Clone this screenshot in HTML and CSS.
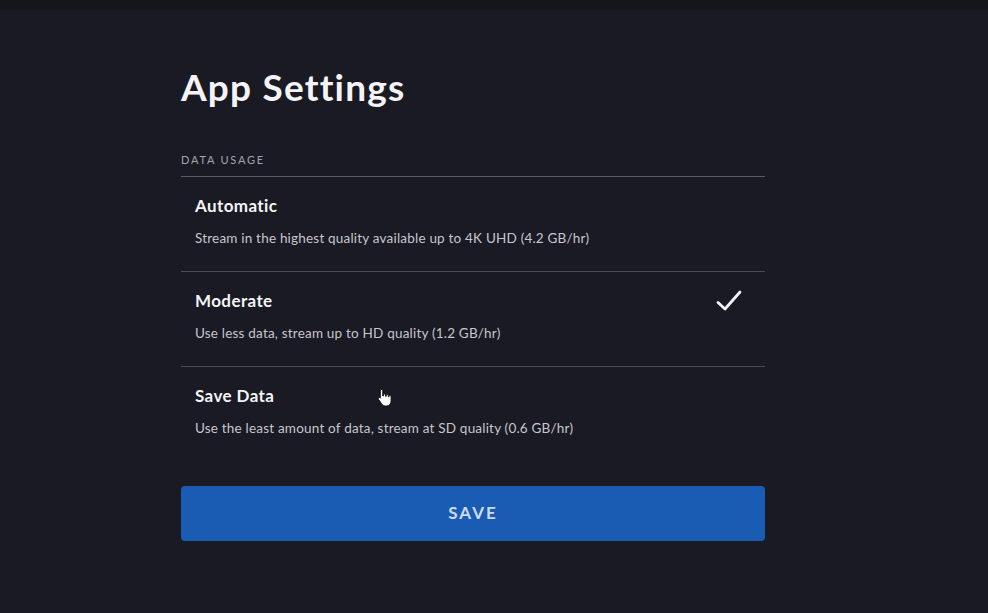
FILE: index.html
```html
<!DOCTYPE html>
<html lang="en">
<head>
<meta charset="utf-8">
<title>App Settings</title>
<link rel="stylesheet" href="styles.css">
</head>
<body>
<div class="topband"></div>
<main class="settings">
  <h1 class="title">App Settings</h1>
  <div class="section-label">DATA USAGE</div>
  <ul class="options">
    <li class="option">
      <div class="option-text">
        <div class="option-name">Automatic</div>
        <div class="option-desc">Stream in the highest quality available up to 4K UHD (4.2 GB/hr)</div>
      </div>
    </li>
    <li class="option selected">
      <div class="option-text">
        <div class="option-name">Moderate</div>
        <div class="option-desc">Use less data, stream up to HD quality (1.2 GB/hr)</div>
      </div>
      <svg class="check" width="28" height="24" viewBox="0 0 28 24" aria-hidden="true">
        <path d="M3 13.5 L10 20 L25 3" fill="none" stroke="#f2f2f4" stroke-width="2.8" stroke-linecap="round" stroke-linejoin="round"/>
      </svg>
    </li>
    <li class="option last">
      <div class="option-text">
        <div class="option-name">Save Data</div>
        <div class="option-desc">Use the least amount of data, stream at SD quality (0.6 GB/hr)</div>
      </div>
      <svg class="cursor" width="16" height="20" viewBox="0 0 16 20" aria-hidden="true">
        <path d="M4.5 1.5 C5.3 1.5 5.8 2 5.8 2.8 L5.8 8 L6.4 8 L6.4 7 C6.4 6.3 7 5.9 7.6 5.9 C8.2 5.9 8.7 6.3 8.7 7 L8.7 8.3 L9.2 8.3 L9.2 7.6 C9.2 7 9.8 6.6 10.4 6.6 C11 6.6 11.4 7 11.4 7.6 L11.4 8.8 L11.9 8.8 L11.9 8.4 C11.9 7.8 12.4 7.5 13 7.5 C13.6 7.5 14.1 7.9 14.1 8.5 L14.1 13 C14.1 15.8 12.6 18 9.6 18 L8.4 18 C6.6 18 5.6 17.2 4.6 15.8 L1.6 11.6 C1.1 10.9 1.3 10.2 1.9 9.8 C2.5 9.4 3.2 9.6 3.6 10.2 L3.3 9.8 L3.3 2.8 C3.3 2 3.8 1.5 4.5 1.5 Z" fill="#ffffff" stroke="#111" stroke-width="1"/>
      </svg>
    </li>
  </ul>
  <button class="save" type="button">SAVE</button>
</main>
</body>
</html>
```

FILE: styles.css
```css
* { box-sizing: border-box; }
html, body {
  margin: 0;
  padding: 0;
  height: 100%;
}
body {
  background: #191a23;
  font-family: Lato, "Noto Sans", "Liberation Sans", sans-serif;
  color: #f2f2f4;
  overflow: hidden;
}
.topband {
  height: 10px;
  background: #15161b;
}
.settings {
  width: 584px;
  margin-left: 181px;
  padding-top: 55px;
}
.title {
  margin: 0;
  font-size: 37px;
  line-height: 44px;
  font-weight: 700;
  color: #f4f4f6;
  letter-spacing: 1.2px;
}
.section-label {
  margin-top: 44px;
  font-size: 11px;
  line-height: 14px;
  letter-spacing: 1.8px;
  color: #a3a4ab;
  font-weight: 400;
  padding-bottom: 9px;
  border-bottom: 1px solid #5b5c64;
}
.options {
  list-style: none;
  margin: 0;
  padding: 0;
}
.option {
  position: relative;
  display: flex;
  align-items: flex-start;
  justify-content: space-between;
  padding: 19px 22px 24px 14px;
  border-bottom: 1px solid #4b4c55;
}
.option.last {
  border-bottom: none;
}
.option-text {
  display: flex;
  flex-direction: column;
  gap: 13px;
}
.option-name {
  font-size: 17px;
  line-height: 20px;
  font-weight: 700;
  color: #f4f4f6;
  letter-spacing: 0.4px;
}
.option-desc {
  font-size: 13.5px;
  line-height: 18px;
  color: #c6c6cc;
  letter-spacing: 0.2px;
}
.check {
  margin-top: -2px;
}
.cursor {
  position: absolute;
  left: 196px;
  top: 21px;
}
.save {
  display: block;
  width: 100%;
  height: 55px;
  margin-top: 25px;
  padding-bottom: 3px;
  border: none;
  border-radius: 4px;
  background: #1a5cb3;
  color: #cddbef;
  font-family: Lato, "Noto Sans", "Liberation Sans", sans-serif;
  font-size: 17px;
  font-weight: 700;
  letter-spacing: 2px;
}
```
